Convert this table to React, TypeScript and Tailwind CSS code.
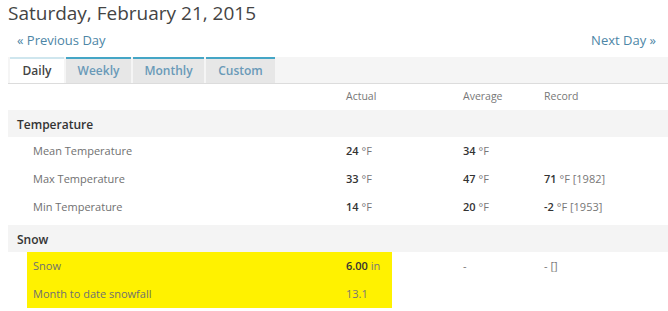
const font = { fontFamily: '"Open Sans", "Liberation Sans", sans-serif' }

type Row = {
  label: string
  actual?: [string, string]
  average?: [string, string]
  record?: [string, string]
  highlight?: boolean
}

const temperature: Row[] = [
  { label: 'Mean Temperature', actual: ['24', '°F'], average: ['34', '°F'] },
  { label: 'Max Temperature', actual: ['33', '°F'], average: ['47', '°F'], record: ['71', '°F [1982]'] },
  { label: 'Min Temperature', actual: ['14', '°F'], average: ['20', '°F'], record: ['-2', '°F [1953]'] },
]

const snow: Row[] = [
  { label: 'Snow', actual: ['6.00', 'in'], average: ['', '-'], record: ['', '- []'], highlight: true },
  { label: 'Month to date snowfall', actual: ['', '13.1'], highlight: true },
]

function Value({ v }: { v?: [string, string] }) {
  if (!v) return null
  return (
    <span className="whitespace-nowrap">
      {v[0] && <span className="font-semibold text-[#333]">{v[0]}</span>}
      {v[0] && v[1] ? ' ' : ''}
      <span className="text-[#777]">{v[1]}</span>
    </span>
  )
}

function DataRow({ row }: { row: Row }) {
  const hl = row.highlight ? 'bg-[#fff200]' : ''
  return (
    <div className="flex h-[28px] items-center text-[11px] ml-[19px]">
      <div className={`w-[313px] shrink-0 h-full flex items-center px-[6px] text-[#707070] ${hl}`}>{row.label}</div>
      <div className={`w-[52px] shrink-0 h-full flex items-center px-[6px] ${hl}`}>
        <Value v={row.actual} />
      </div>
      <div className="w-[71px] shrink-0" />
      <div className="w-[81px] shrink-0">
        <Value v={row.average} />
      </div>
      <div className="flex-1">
        <Value v={row.record} />
      </div>
    </div>
  )
}

function Section({ title }: { title: string }) {
  return (
    <div className="h-[27px] flex items-center pl-[9px] pt-[2px] bg-[#f4f4f4] text-[12px] font-semibold text-[#333]">
      {title}
    </div>
  )
}

export default function App() {
  const tabs = ['Weekly', 'Monthly', 'Custom']
  return (
    <div className="w-[668px] h-[311px] bg-white overflow-hidden" style={font}>
      <div className="h-[27px] pl-[8px] text-[19px] leading-[26px] text-[#444]">Saturday, February 21, 2015</div>

      <div className="h-[30px] flex justify-between items-start pl-[17px] pr-[12px] text-[13px] leading-[26px] text-[#4d86a6]">
        <span>« Previous Day</span>
        <span>Next Day »</span>
      </div>

      <div className="ml-[8px] h-[27px] flex bg-[#f5f5f5] border-b border-[#dcdcdc] pl-[2px] gap-[2px] text-[12px]">
        <div className="w-[54px] bg-white border-t-2 border-[#cfe6ee] flex items-center justify-center font-semibold text-[#444]">
          Daily
        </div>
        {tabs.map((t) => (
          <div
            key={t}
            className={`${t === 'Weekly' ? 'w-[65px]' : t === 'Monthly' ? 'w-[71px]' : 'w-[69px]'} bg-[#e7e7e7] border-t-2 border-[#45a6c6] flex items-center justify-center font-semibold text-[#6a9ab8]`}
          >
            {t}
          </div>
        ))}
      </div>

      <div className="ml-[8px]">
        <div className="flex h-[26px] items-center text-[10.5px] text-[#777] ml-[19px]">
          <div className="w-[313px] shrink-0" />
          <div className="w-[52px] shrink-0 px-[6px]">Actual</div>
          <div className="w-[71px] shrink-0" />
          <div className="w-[81px] shrink-0">Average</div>
          <div className="flex-1">Record</div>
        </div>

        <Section title="Temperature" />
        {temperature.map((r) => (
          <DataRow key={r.label} row={r} />
        ))}

        <div className="h-[4px]" />
        <Section title="Snow" />
        {snow.map((r) => (
          <DataRow key={r.label} row={r} />
        ))}
      </div>
    </div>
  )
}
